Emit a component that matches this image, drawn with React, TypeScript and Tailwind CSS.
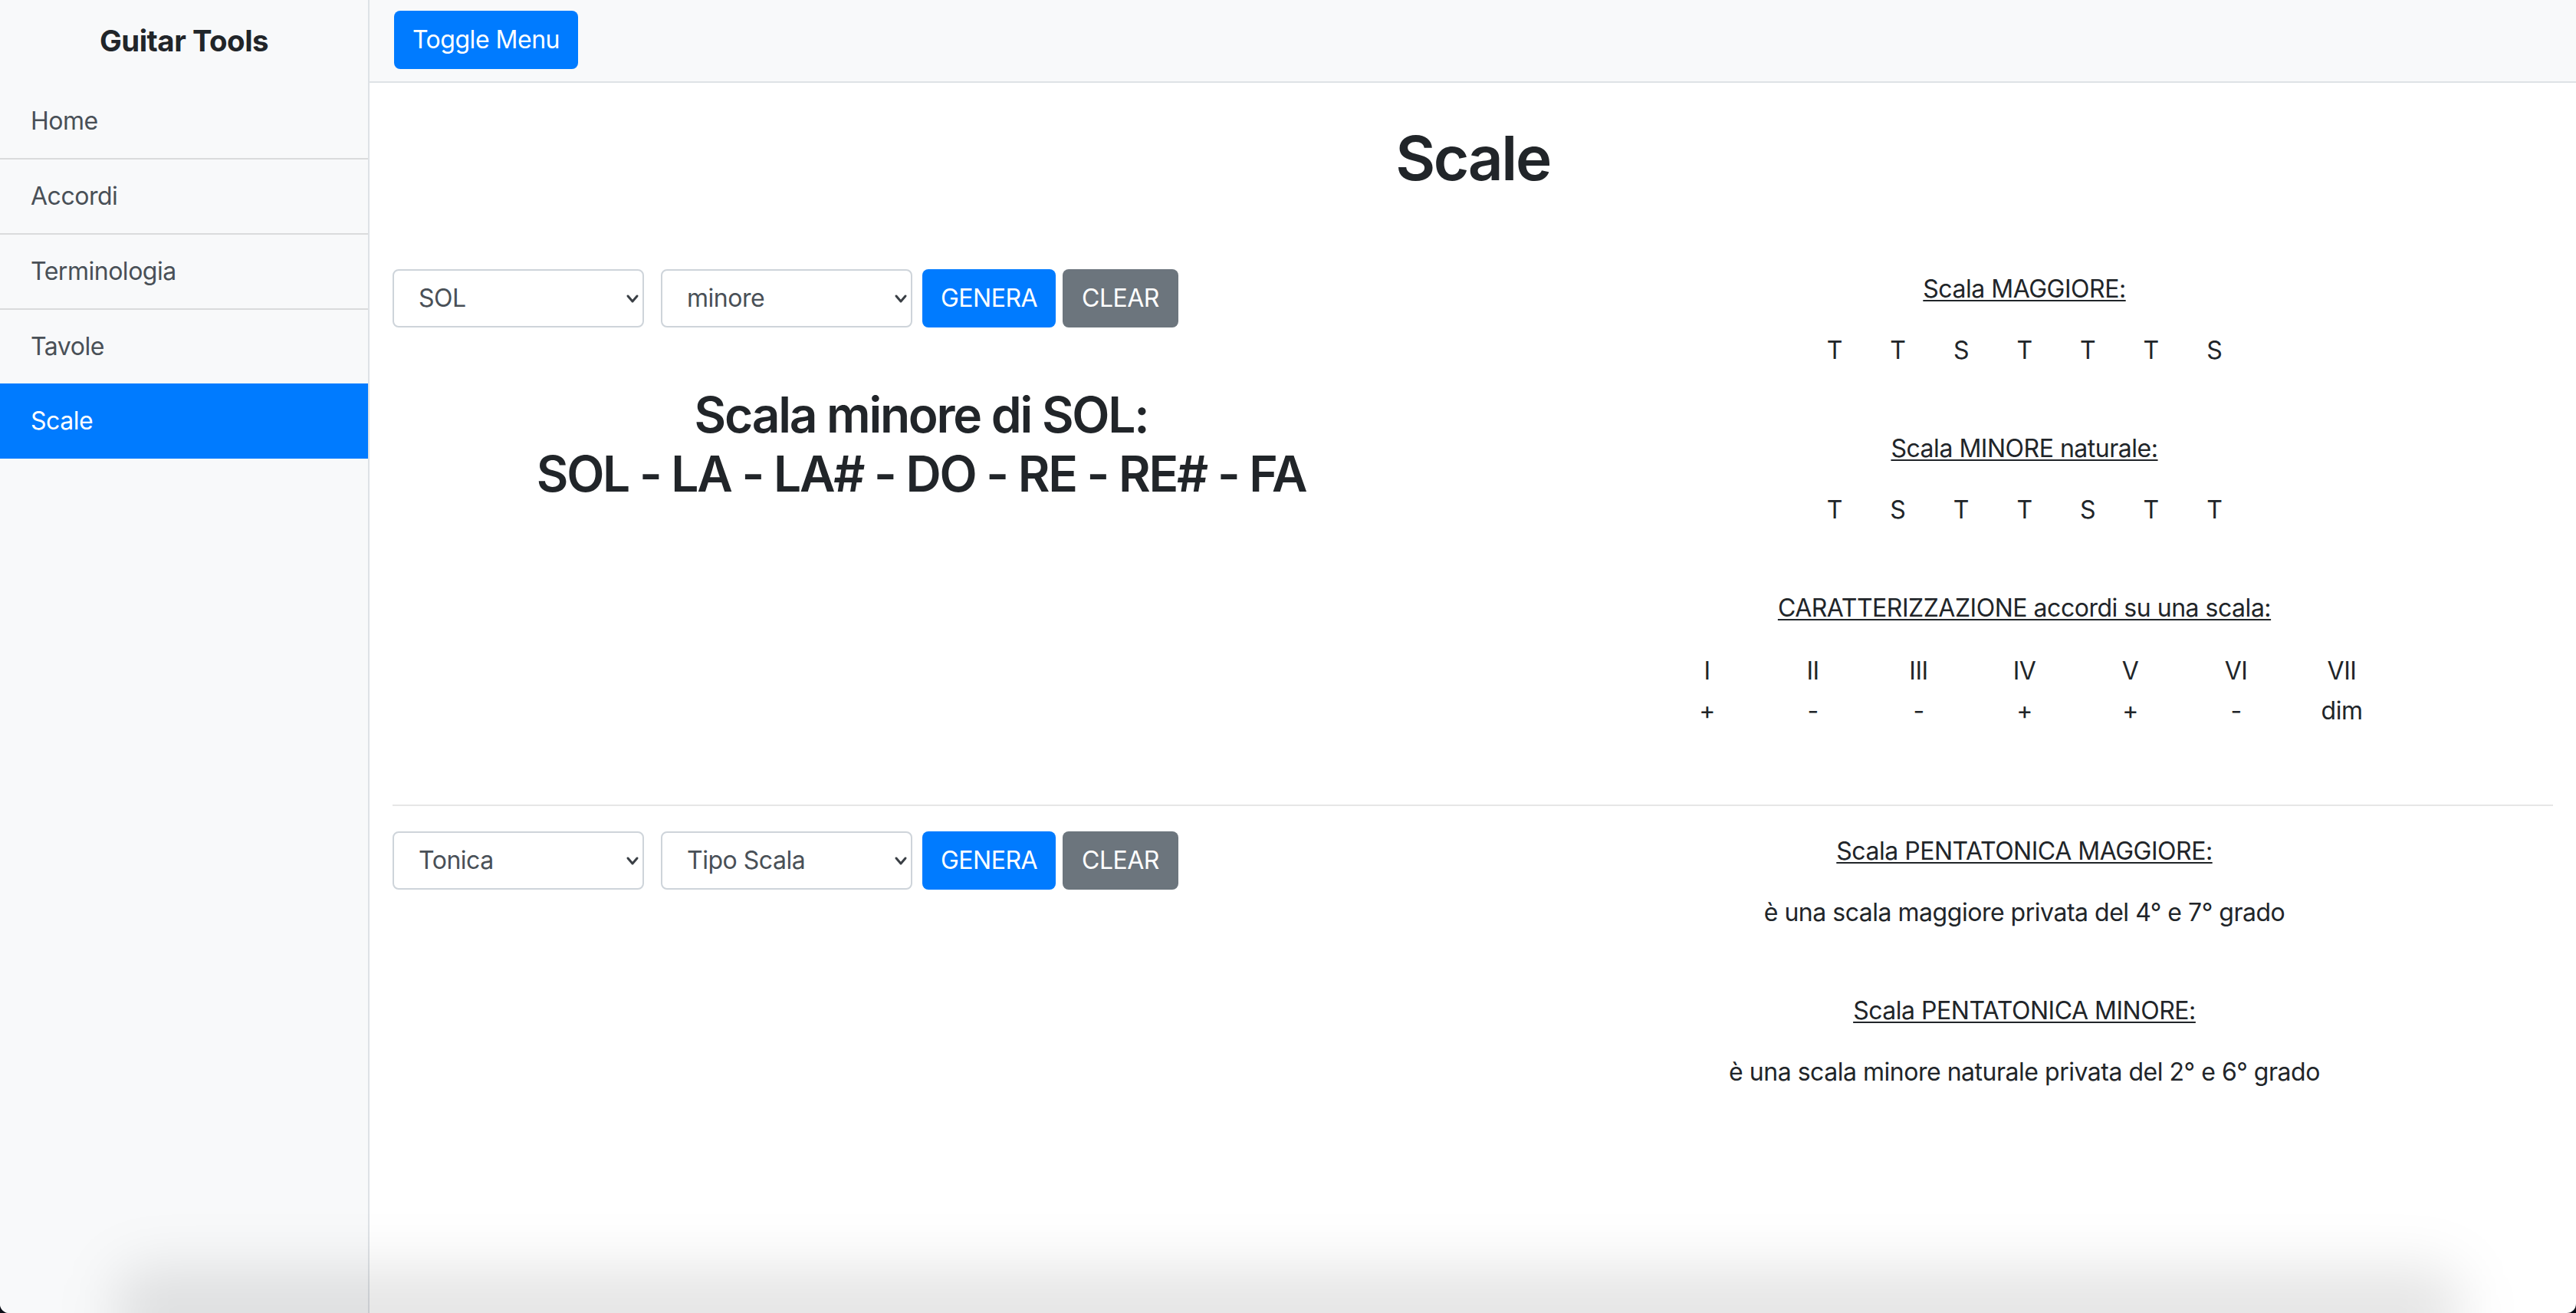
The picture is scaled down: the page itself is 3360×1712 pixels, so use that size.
import React from "react";

const menu = ["Home", "Accordi", "Terminologia", "Tavole", "Scale"];

const Select = ({ value, options }: { value: string; options: string[] }) => {
  return (
    <div className="relative h-[76px] w-[328px] shrink-0">
      <select
        defaultValue={value}
        className="h-full w-full appearance-none rounded-[8px] border-2 border-[#ced4da] bg-white pl-[32px] pr-[48px] text-[32px] leading-[48px] text-[#495057] outline-none"
      >
        {options.map((o) => (
          <option key={o}>{o}</option>
        ))}
      </select>
      <svg
        className="pointer-events-none absolute right-[6px] top-[32px]"
        width="18"
        height="13"
        viewBox="0 0 18 13"
      >
        <polyline
          points="3,3 9,10 15,3"
          fill="none"
          stroke="#3a3f45"
          strokeWidth="3"
          strokeLinecap="round"
          strokeLinejoin="round"
        />
      </svg>
    </div>
  );
};

const Controls = ({ first, second }: any) => {
  return (
    <div className="flex items-start">
      <Select value={first[0]} options={first} />
      <div className="ml-[22px]">
        <Select value={second[0]} options={second} />
      </div>
      <button className="ml-[13px] h-[76px] w-[174px] rounded-[8px] bg-[#007bff] text-[32px] leading-[48px] text-white">
        GENERA
      </button>
      <button className="ml-[9px] h-[76px] w-[151px] rounded-[8px] bg-[#6c757d] text-[32px] leading-[48px] text-white">
        CLEAR
      </button>
    </div>
  );
};

const Steps = ({ items }: { items: string[] }) => (
  <div className="mb-[32px] flex justify-center">
    {items.map((s, i) => (
      <span key={i} className="w-[82.6px] text-center">
        {s}
      </span>
    ))}
  </div>
);

const Title = ({ children }: any) => (
  <p className="mb-[32px] underline decoration-[2px] underline-offset-[3px]">{children}</p>
);

const degrees = ["I", "II", "III", "IV", "V", "VI", "VII"];
const kinds = ["+", "-", "-", "+", "+", "-", "dim"];

export default function App() {
  return (
    <div className="h-[1712px] w-full bg-[#0c0f17] font-['Inter',sans-serif] tracking-[-0.03em]">
      <div className="relative flex h-full overflow-hidden rounded-b-[12px] bg-white text-[#212529]">
        <aside className="w-[482px] shrink-0 border-r-2 border-[#dee2e6] bg-[#f8f9fa]">
          <div className="flex h-[110px] items-center justify-center pb-[2px] text-[38.4px] font-bold">
            Guitar Tools
          </div>
          {menu.map((m, i) =>
            m === "Scale" ? (
              <div
                key={m}
                className="flex h-[98px] items-center bg-[#007bff] px-[40px] text-[32px] text-white"
              >
                {m}
              </div>
            ) : (
              <div
                key={m}
                className={`flex items-center px-[40px] text-[32px] text-[#495057] ${
                  i < 3 ? "h-[98px] border-b-2 border-[#dadbdc]" : "h-[96px]"
                }`}
              >
                {m}
              </div>
            )
          )}
        </aside>

        <main className="min-w-0 flex-1">
          <nav className="h-[108px] border-b-2 border-[#dee2e6] bg-[#f8f9fa] px-[32px] pt-[14px]">
            <button className="h-[76px] w-[240px] rounded-[8px] bg-[#007bff] text-[32px] leading-[48px] text-white">
              Toggle Menu
            </button>
          </nav>

          <div className="px-[30px]">
            <h1 className="mt-[50px] text-center text-[80px] font-semibold leading-[96px] tracking-[-0.03em]">
              Scale
            </h1>

            <div className="mt-[97px] grid grid-cols-2 gap-x-[60px]">
              <div>
                <Controls
                  first={["SOL", "DO", "RE", "MI", "FA", "LA", "SI"]}
                  second={["minore", "maggiore"]}
                />
                <h2 className="mt-[76px] text-center text-[64px] font-semibold leading-[76.8px] tracking-[-0.035em]">
                  Scala minore di SOL:
                  <br />
                  SOL - LA - LA# - DO - RE - RE# - FA
                </h2>
              </div>
              <div className="pt-[2px] text-center text-[32px] leading-[48px]">
                <Title>Scala MAGGIORE:</Title>
                <Steps items={["T", "T", "S", "T", "T", "T", "S"]} />
                <div className="h-[48px]" />
                <Title>Scala MINORE naturale:</Title>
                <Steps items={["T", "S", "T", "T", "S", "T", "T"]} />
                <div className="h-[48px]" />
                <Title>CARATTERIZZAZIONE accordi su una scala:</Title>
                <div className="flex flex-col items-center">
                  <div className="flex">
                    {degrees.map((d) => (
                      <span key={d} className="flex h-[52px] w-[138px] items-center justify-center">
                        {d}
                      </span>
                    ))}
                  </div>
                  <div className="flex">
                    {kinds.map((k, i) => (
                      <span key={i} className="flex h-[52px] w-[138px] items-center justify-center">
                        {k}
                      </span>
                    ))}
                  </div>
                </div>
              </div>
            </div>

            <hr className="mt-[96px] border-t-2 border-[#e6e6e6]" />

            <div className="mt-[33px] grid grid-cols-2 gap-x-[60px]">
              <div>
                <Controls
                  first={["Tonica", "DO", "RE", "MI", "FA", "SOL", "LA", "SI"]}
                  second={["Tipo Scala", "pentatonica maggiore", "pentatonica minore"]}
                />
              </div>
              <div className="pt-[2px] text-center text-[32px] leading-[48px]">
                <Title>Scala PENTATONICA MAGGIORE:</Title>
                <p className="mb-[32px]">è una scala maggiore privata del 4° e 7° grado</p>
                <div className="h-[48px]" />
                <Title>Scala PENTATONICA MINORE:</Title>
                <p className="mb-[32px]">è una scala minore naturale privata del 2° e 6° grado</p>
              </div>
            </div>
          </div>
        </main>

        <div className="pointer-events-none absolute bottom-[-60px] left-[150px] right-[150px] h-[120px] rounded-[40px] bg-black/[0.1] blur-[36px]" />
      </div>
    </div>
  );
}
